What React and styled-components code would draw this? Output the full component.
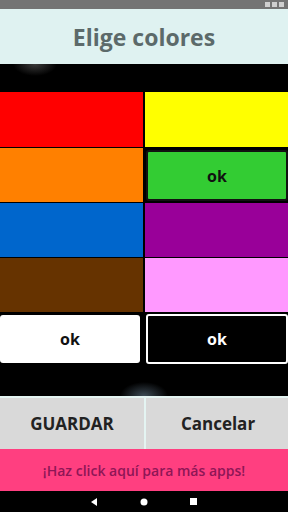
import React from "react";
import styled, { createGlobalStyle } from "styled-components";

const GlobalStyle = createGlobalStyle`
  html, body { margin:0; padding:0; background:#000; }
  body { font-family: "Open Sans", "DejaVu Sans", sans-serif; }
`;

/* pantalla completa */
const Screen = styled.div`
  width:288px;
  height:512px;
  display:flex;
  flex-direction:column;
  background:#000;
  overflow:hidden;
`;

const StatusBar = styled.div`
  height:9px;
  background:#747474;
  display:flex;
  justify-content:flex-end;
  align-items:center;
  gap:2px;
  padding-right:4px;
`;

const StatusIcon = styled.span`
  width:5px;
  height:5px;
  background:#e6e6e6;
  opacity:0.8;
`;

const Header = styled.div`
  height:55px;
  background:#dff2f1;
  display:flex;
  align-items:center;
  justify-content:center;
`;

const Title = styled.h1`
  margin:0;
  font-size:23px;
  font-weight:700;
  color:#5c6a6a;
`;

const Spacer = styled.div`
  height:${p => p.h}px;
  background:${p => p.bg || "#000"};
`;

const Grid = styled.div`
  display:grid;
  grid-template-columns:143px 143px;
  column-gap:2px;
  row-gap:1px;
`;

const Swatch = styled.div`
  height:${p => p.h || 55}px;
  background:${p => p.color};
  display:flex;
  align-items:center;
  justify-content:center;
  box-sizing:border-box;
  border-radius:${p => p.round ? "3px" : "0"};
  border:${p => p.border ? `2px solid ${p.border}` : "none"};
  margin:${p => p.inset || "0"};
`;

const OkText = styled.span`
  font-size:16px;
  font-weight:700;
  color:${p => p.light ? "#fff" : "#111"};
`;

const ButtonRow = styled.div`
  height:53px;
  display:grid;
  grid-template-columns:144px 144px;
  background:#e4f4f2;
  column-gap:2px;
  padding-top:2px;
  box-sizing:border-box;
`;

const ActionButton = styled.div`
  background:#d9d9d9;
  display:flex;
  align-items:center;
  justify-content:center;
  font-size:17px;
  font-weight:700;
  color:#222;
`;

const Banner = styled.div`
  height:42px;
  background:#ff3f80;
  display:flex;
  align-items:center;
  justify-content:center;
  font-size:14px;
  font-weight:600;
  color:#8e1656;
`;

const NavBar = styled.div`
  flex:1;
  background:#000;
  display:flex;
  align-items:center;
  justify-content:center;
  gap:42px;
`;

const colors = [
  ["#ff0000", "#ffff00"],
  ["#ff8000", null],
  ["#0066cc", "#990099"],
  ["#663300", "#ff99ff"],
];

export default function App() {
  return (
    <Screen>
      <GlobalStyle />
      <StatusBar>
        <StatusIcon />
        <StatusIcon />
        <StatusIcon />
      </StatusBar>
      <Header>
        <Title>Elige colores</Title>
      </Header>
      <Spacer
        h={28}
        bg="radial-gradient(ellipse 22px 12px at 35px 0px, #3a3a3a 0, #000 100%), radial-gradient(ellipse 22px 12px at 250px 0px, #3a3a3a 0, #000 100%)"
      />
      <Grid>
        {colors.map((row, i) =>
          row.map((c, j) =>
            c ? (
              <Swatch key={`${i}-${j}`} color={c} h={i === 0 ? 55 : 54} />
            ) : (
              <Swatch key={`${i}-${j}`} color="#33cc33" border="#111" round h={51} inset="2px 0 1px 1px">
                <OkText>ok</OkText>
              </Swatch>
            )
          )
        )}
      </Grid>
      <Spacer h={3} />
      <Grid>
        <Swatch color="#ffffff" round h={48} inset="0 3px 0 0">
          <OkText>ok</OkText>
        </Swatch>
        <Swatch color="#000" border="#fff" round h={50} inset="-1px 0 0 1px">
          <OkText light>ok</OkText>
        </Swatch>
      </Grid>
      <Spacer h={32} bg="radial-gradient(ellipse 24px 14px at 144px 32px, #3d4a55 0, #000 100%)" />
      <ButtonRow>
        <ActionButton>GUARDAR</ActionButton>
        <ActionButton>Cancelar</ActionButton>
      </ButtonRow>
      <Banner>¡Haz click aquí para más apps!</Banner>
      <NavBar>
        <svg width="7" height="8" viewBox="0 0 7 8">
          <path d="M6 0 L6 8 L0 4 Z" fill="#fff" />
        </svg>
        <svg width="8" height="8" viewBox="0 0 8 8">
          <circle cx="4" cy="4" r="3.5" fill="#fff" />
        </svg>
        <svg width="7" height="7" viewBox="0 0 7 7">
          <rect width="7" height="7" fill="#fff" />
        </svg>
      </NavBar>
    </Screen>
  );
}
